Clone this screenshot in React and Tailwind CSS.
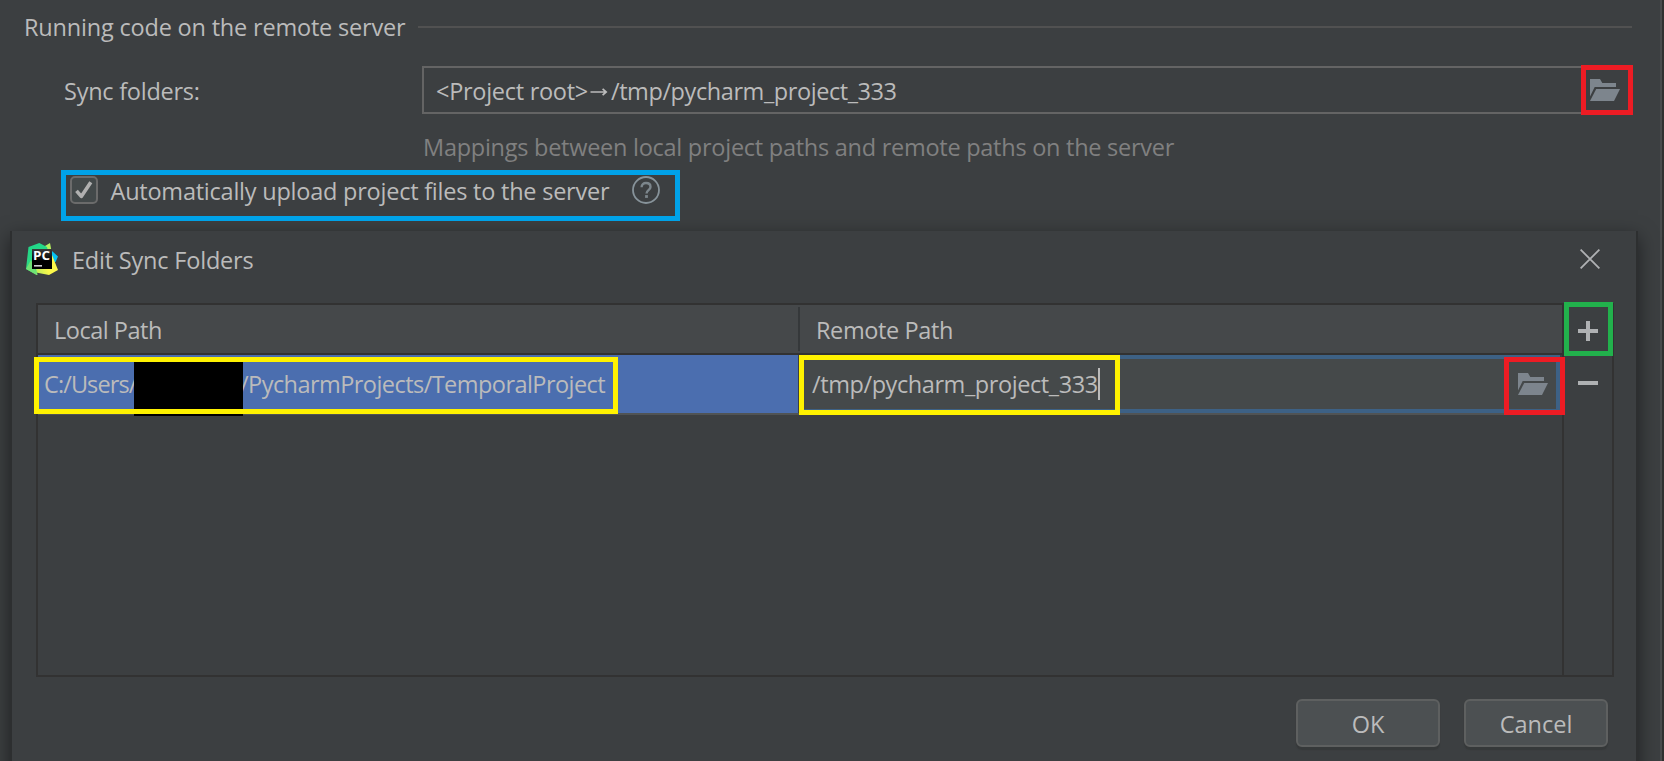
function FolderIcon() {
  return (
    <svg width="30" height="22" viewBox="0 0 30 22" fill="#7d858d" className="block shrink-0">
      <path d="M0 0H10L12.3 4H26V8H4.7L0 17.4Z" />
      <path d="M6.2 10H30L24 22H0Z" />
    </svg>
  );
}

function PyCharmLogo() {
  return (
    <svg width="32" height="32" viewBox="0 0 32 32" className="block shrink-0">
      <defs>
        <linearGradient id="pcGreen" x1="6" y1="2" x2="12" y2="32" gradientUnits="userSpaceOnUse">
          <stop offset="0" stopColor="#21d789" />
          <stop offset="0.7" stopColor="#2fd882" />
          <stop offset="1" stopColor="#8fe86a" />
        </linearGradient>
        <linearGradient id="pcYellow" x1="8" y1="28" x2="28" y2="18" gradientUnits="userSpaceOnUse">
          <stop offset="0" stopColor="#b5ee5c" />
          <stop offset="0.6" stopColor="#fcf84a" />
        </linearGradient>
        <linearGradient id="pcBlack" x1="0" y1="6" x2="0" y2="18" gradientUnits="userSpaceOnUse">
          <stop offset="0" stopColor="#3a3a3a" />
          <stop offset="1" stopColor="#000000" />
        </linearGradient>
      </defs>
      <path d="M26 8L32 13.5L29.5 19L24 20Z" fill="#07c3f2" />
      <path d="M14 6L24 0L25.5 8L18 10Z" fill="#b4ee5e" />
      <path d="M26 12L32 27L23 32L10 29.5L4 20Z" fill="url(#pcYellow)" />
      <path d="M2.5 4L13.3 0L21 4L22 8L8 18L11.5 31.5L10.5 32L0 26Z" fill="url(#pcGreen)" />
      <path d="M5 17L11.5 32L0 26Z" fill="#6fe374" />
      <rect x="6" y="6" width="20" height="20" fill="url(#pcBlack)" />
      <text
        x="7"
        y="16.8"
        fill="#ffffff"
        textLength="17"
        lengthAdjust="spacingAndGlyphs"
        className="font-['Open_Sans',sans-serif] text-[12px] font-bold"
      >
        PC
      </text>
      <rect x="8" y="22.2" width="8" height="1.3" fill="#ffffff" />
    </svg>
  );
}

function HelpIcon() {
  return (
    <svg width="28" height="28" viewBox="0 0 28 28" fill="none" stroke="#87939a" className="block shrink-0">
      <circle cx="14" cy="14" r="13" strokeWidth="1.8" />
      <path d="M9.6 11.2C9.6 8.4 11.5 7 14 7S18.5 8.4 18.5 10.9C18.5 14 14.5 14.2 14.5 17.4" strokeWidth="2.4" stroke="#7c868c" />
      <path d="M13.1 20.5H15.9" strokeWidth="2.8" stroke="#7c868c" />
    </svg>
  );
}

function Checkbox() {
  return (
    <span className="flex h-7 w-7 shrink-0 rounded-[5px] border-2 border-[#6b6b6b] bg-[#43494a]">
      <svg width="24" height="24" viewBox="0 0 24 24" fill="none" stroke="#b0b0b0" strokeWidth="3.6" className="block">
        <path d="M4.5 12.8L9.3 18.4L18.8 4.2" strokeLinecap="butt" strokeLinejoin="round" />
      </svg>
    </span>
  );
}

function SettingsPane() {
  return (
    <div className="flex flex-1 flex-col pr-7 pt-[11px]">
      <div className="flex h-8 items-center pl-6">
        <span className="w-[394px] shrink-0 tracking-[-0.19px]">Running code on the remote server</span>
        <span className="h-0.5 flex-1 bg-[#515151]" />
      </div>

      <div className="mt-[23px] flex h-12 pl-16">
        <span className="w-[358px] shrink-0 pt-[9px] tracking-[-0.25px]">Sync folders:</span>
        <div className="mr-0.5 flex flex-1 items-center border-2 border-[#646464] pl-3">
          <span className="pt-0.5 tracking-[-0.28px]">&lt;Project root&gt;</span>
          <span className="flex w-[23px] justify-center">
            <svg width="18" height="8" viewBox="0 0 18 8" fill="none" stroke="#bbbbbb" strokeWidth="1.7" className="mt-1 block">
              <path d="M0.5 4H16.5M12.6 0.8L16.2 4L12.6 7.2" />
            </svg>
          </span>
          <span className="flex-1 pt-0.5 tracking-[-0.42px]">/tmp/pycharm_project_333</span>
          <span className="pr-[8px]">
            <FolderIcon />
          </span>
        </div>
      </div>

      <p className="mt-[17px] pl-[423px] tracking-[-0.26px] text-[#808080]">
        Mappings between local project paths and remote paths on the server
      </p>

      <div className="mt-3 flex pl-[70px]">
        <span className="pt-px">
          <Checkbox />
        </span>
        <span className="ml-[12.5px] w-[521.5px] tracking-[-0.23px]">Automatically upload project files to the server</span>
        <span className="pt-px">
          <HelpIcon />
        </span>
      </div>
    </div>
  );
}

function DialogButton({ children }) {
  return (
    <button className="flex h-12 w-36 items-center justify-center rounded-[6px] border-2 border-[#5e6060] bg-[#4c5052] pt-px shadow-[0_3px_1px_#36393a]">
      {children}
    </button>
  );
}

function SyncFoldersTable() {
  return (
    <div className="mx-6 flex h-[374px] w-[1578px] border-2 border-[#323232]">
      <div className="flex w-[1526px] shrink-0 flex-col border-r-2 border-[#323232]">
        <div className="flex h-[50px] shrink-0 items-center border-b-2 border-[#323232] bg-[#45484a]">
          <span className="w-[760px] pl-4 pt-0.5 tracking-[-0.48px]">Local Path</span>
          <span className="h-[44px] w-0.5 bg-[#35383a]" />
          <span className="pl-4 pt-0.5 tracking-[-0.38px]">Remote Path</span>
        </div>
        <div className="flex h-[60px] shrink-0 border-b-2 border-[#505354]">
          <div className="flex w-[760px] items-center bg-[#4b6eaf] pl-1.5">
            <span className="w-[90px] whitespace-nowrap tracking-[-0.9px]">C:/Users/</span>
            <span className="h-[54px] w-[109px] shrink-0 translate-y-[5px] bg-black" />
            <span className="-ml-[3px] tracking-[-0.55px]">/PycharmProjects/TemporalProject</span>
          </div>
          <div className="ml-0.5 mr-0.5 flex flex-1 items-center border-4 border-[#3d6185] bg-[#45494a] pl-2">
            <span className="tracking-[-0.42px]">/tmp/pycharm_project_333</span>
            <span className="h-8 w-0.5 bg-[#bbbbbb]" />
            <span className="ml-auto pr-[8px]">
              <FolderIcon />
            </span>
          </div>
        </div>
      </div>
      <div className="flex flex-1 flex-col items-center pt-4">
        <svg width="20" height="20" viewBox="0 0 20 20" fill="#afb1b3" className="block">
          <path d="M8 0H12V8H20V12H12V20H8V12H0V8H8Z" />
        </svg>
        <span className="mt-10 h-1 w-5 bg-[#afb1b3]" />
      </div>
    </div>
  );
}

function SyncFoldersDialog() {
  return (
    <div className="absolute left-[10px] top-[231px] h-[560px] w-[1628px] border-x-2 border-[#2d2f30] bg-[#3c3f41] shadow-[0_6px_18px_rgba(0,0,0,0.5)]">
      <div className="flex h-[72px] pl-3.5 pr-9 pt-3">
        <PyCharmLogo />
        <span className="ml-3.5 pt-px tracking-[-0.2px]">Edit Sync Folders</span>
        <svg width="20" height="20" viewBox="0 0 20 20" fill="none" stroke="#afb1b3" strokeWidth="1.8" className="ml-auto mt-1.5 block">
          <path d="M0.6 0.6L19.4 19.4M19.4 0.6L0.6 19.4" />
        </svg>
      </div>
      <SyncFoldersTable />
      <div className="mt-[22px] flex justify-end gap-6 pr-7">
        <DialogButton>OK</DialogButton>
        <DialogButton>Cancel</DialogButton>
      </div>
    </div>
  );
}

function Highlights() {
  return (
    <>
      <div className="absolute left-[1581px] top-[65px] h-[50px] w-[52px] border-5 border-[#ed1c24]" />
      <div className="absolute left-[61px] top-[170px] h-[51px] w-[619px] border-5 border-[#00a2e8]" />
      <div className="absolute left-[1564px] top-[302px] h-[54px] w-[49px] border-5 border-[#22b14c]" />
      <div className="absolute left-[1504px] top-[357px] h-[58px] w-[61px] border-5 border-[#ed1c24]" />
      <div className="absolute left-[34px] top-[357px] h-[57px] w-[584px] border-5 border-[#fff200]" />
      <div className="absolute left-[799px] top-[355px] h-[60px] w-[321px] border-5 border-[#fff200]" />
    </>
  );
}

export default function App() {
  return (
    <div className="relative flex h-[761px] w-[1664px] overflow-hidden bg-[#3c3f41] font-['Open_Sans','Noto_Sans',sans-serif] text-[23.5px] leading-8 text-[#bbbbbb]">
      <SettingsPane />
      <div className="w-1 shrink-0 border-l-2 border-[#494b4c] bg-[#303130]" />
      <SyncFoldersDialog />
      <Highlights />
    </div>
  );
}
